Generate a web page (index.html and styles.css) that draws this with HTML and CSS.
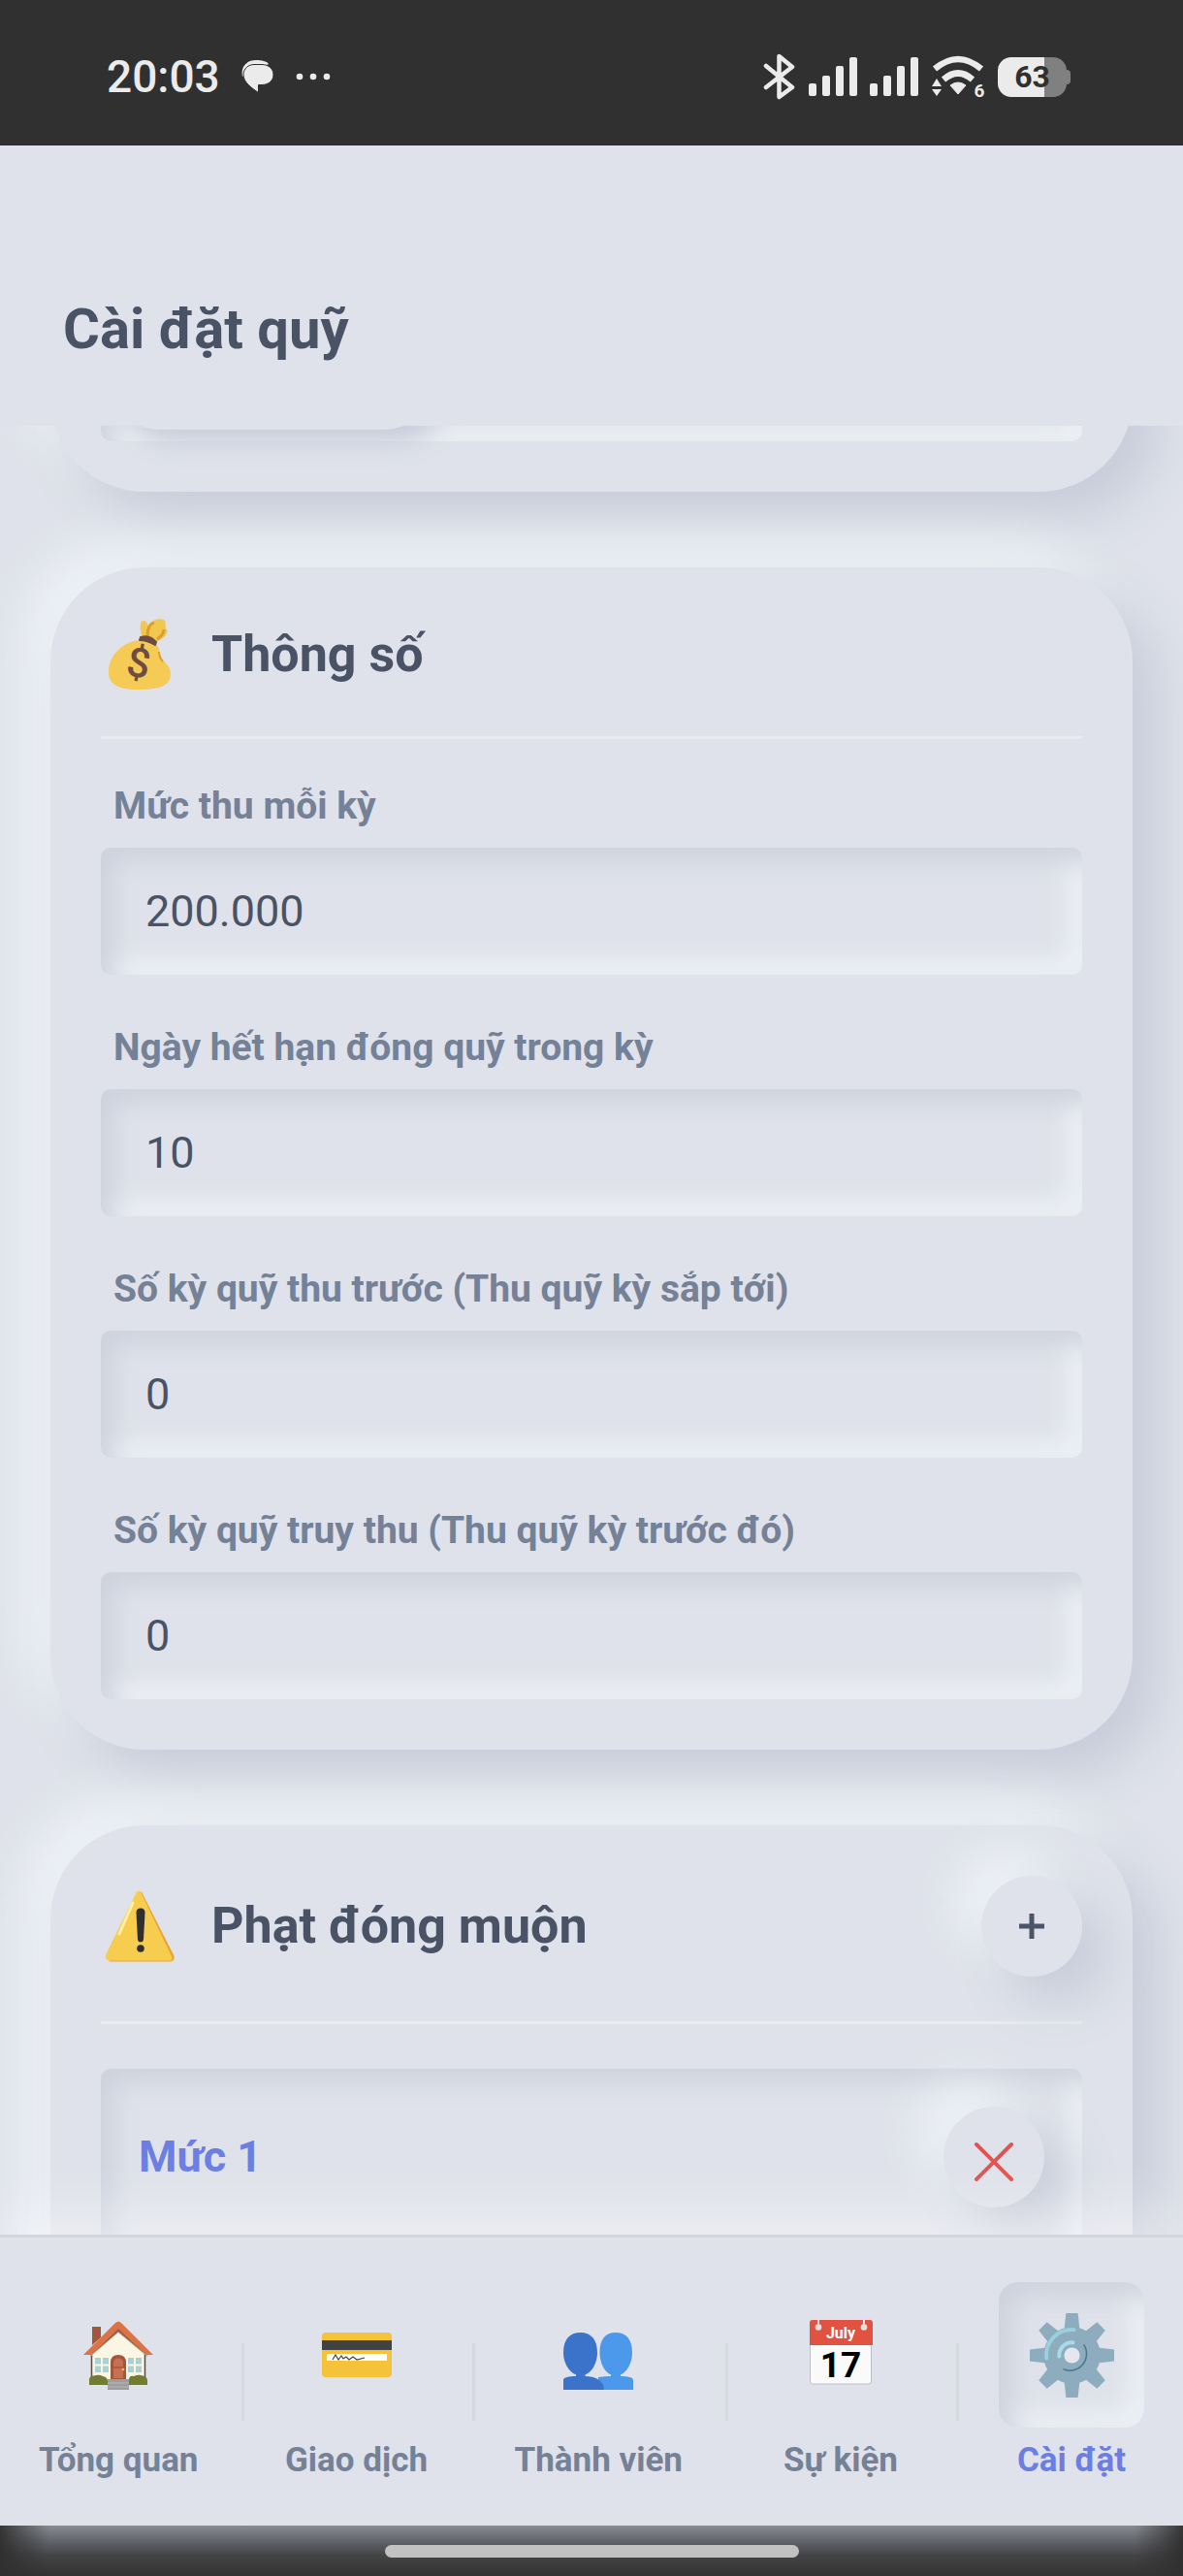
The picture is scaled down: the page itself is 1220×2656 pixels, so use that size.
FILE: index.html
```html
<!DOCTYPE html>
<html lang="vi">
  <head>
    <meta charset="UTF-8" />
    <meta name="viewport" content="width=device-width, initial-scale=1.0" />
    <title>Cài đặt quỹ</title>
    <link rel="stylesheet" href="styles.css">
  </head>
  <body>
    <div class="status-bar">
      <div class="status-left">
        <span class="clock">20:03</span>
        <svg class="chat-icon" width="34" height="34" viewBox="0 0 34 34">
          <path d="M2 17 C0 7 6 0 16 0 C22 0 27 1 29 4" fill="#ebebeb" />
          <path d="M14 4.500 H22 C29 4.500 34 9 34 15 C34 21 29 25.500 22 25.500 H18.500 V33.500 C12 29 3 23 3 15 C3 9 8 4.500 14 4.500 Z" fill="#ebebeb" stroke="#303030" stroke-width="1" />
        </svg>
        <svg width="36" height="8" viewBox="0 0 36 8" fill="#ebebeb">
          <circle cx="4" cy="4" r="3.300" />
          <circle cx="18" cy="4" r="3.300" />
          <circle cx="32" cy="4" r="3.300" />
        </svg>
      </div>
      <div class="status-right">
        <svg width="34" height="48" viewBox="0 0 34 48" fill="none" stroke="#ebebeb" stroke-width="4.500" stroke-linejoin="round" stroke-linecap="round">
          <path d="M3 13 L30 35 L16.500 45 V3 L30 14 L3 35" />
        </svg>
        <svg width="50" height="40" viewBox="0 0 50 40" fill="#ebebeb">
          <rect x="0" y="27" width="8" height="13" rx="2" />
          <rect x="14" y="19" width="8" height="21" rx="2" />
          <rect x="28" y="9" width="8" height="31" rx="2" />
          <rect x="42" y="0" width="8" height="40" rx="2" />
        </svg>
        <svg width="50" height="40" viewBox="0 0 50 40" fill="#ebebeb">
          <rect x="0" y="27" width="8" height="13" rx="2" />
          <rect x="14" y="19" width="8" height="21" rx="2" />
          <rect x="28" y="9" width="8" height="31" rx="2" />
          <rect x="42" y="0" width="8" height="40" rx="2" />
        </svg>
        <svg class="wifi-icon" width="56" height="48" viewBox="0 -3 56 48" fill="none">
          <path d="M4 13 Q28 -7 52 13" stroke="#ebebeb" stroke-width="6.500" />
          <path d="M13 24 Q28 11 43 24" stroke="#ebebeb" stroke-width="6.500" />
          <path d="M20 30 Q28 24 36 30 L28 39 Z" fill="#ebebeb" stroke="#ebebeb" stroke-linejoin="round" />
          <path d="M1 31 L6 23 L11 31 Z M1 34 L6 41 L11 34 Z" fill="#ebebeb" />
          <text x="50" y="42" class="wifi-gen">6</text>
        </svg>
        <div class="battery"><span>63</span></div>
      </div>
    </div>

    <header class="page-header">
      <h1>Cài đặt quỹ</h1>
    </header>

    <main class="content">
      <section class="card card-scrolled">
        <div class="tabs">
          <div class="tab"></div>
        </div>
      </section>

      <section class="card">
        <div class="card-header">
          <svg class="card-icon" viewBox="0 0 76 76">
            <path d="M42 18 C40 10 40 3 44 3 C47 3 48 6 49 8 C52 2 60 0 65 2 C68 4 66 8 67 11 C71 14 67 21 57 25 Z" fill="#f2c750" />
            <path d="M48 19 C48 11 51 6 55 5 M58 22 C61 20 65 17 65 12" stroke="#d99f2f" stroke-width="3" fill="none" />
            <path d="M40 23 C22 25 8 39 8 56 C8 69 19 74 38 74 C58 74 72 71 72 58 C72 49 65 46 63 42 C60 35 61 32 57 27 Z" fill="#f5cb55" />
            <path d="M60 35 C60 40 62 43 64 45" stroke="#d99f2f" stroke-width="2" fill="none" />
            <path d="M41 20 Q50 17 57 25 L56 28 Q48 23 40 23 Z" fill="#6d4c41" stroke="#6d4c41" stroke-width="2" stroke-linejoin="round" />
            <text x="39" y="61" transform="rotate(10 39 47)" class="dollar">$</text>
          </svg>
          <h2>Thông số</h2>
        </div>
        <div class="form-group">
          <label for="amount">Mức thu mỗi kỳ</label>
          <input id="amount" type="text" inputmode="numeric" value="200.000" />
        </div>
        <div class="form-group">
          <label for="due-day">Ngày hết hạn đóng quỹ trong kỳ</label>
          <input id="due-day" type="text" inputmode="numeric" value="10" />
        </div>
        <div class="form-group">
          <label for="ahead">Số kỳ quỹ thu trước (Thu quỹ kỳ sắp tới)</label>
          <input id="ahead" type="text" inputmode="numeric" value="0" />
        </div>
        <div class="form-group">
          <label for="back">Số kỳ quỹ truy thu (Thu quỹ kỳ trước đó)</label>
          <input id="back" type="text" inputmode="numeric" value="0" />
        </div>
      </section>

      <section class="card">
        <div class="card-header">
          <svg class="card-icon" viewBox="0 0 76 76">
            <path d="M41 4 L74 69 Q75 73 71 73 H10 Z" fill="#eba531" stroke="#eba531" stroke-width="3" stroke-linejoin="round" />
            <path d="M39 4 L71 71 H9 Q6 71 8 67 Z" fill="#f6cd4f" stroke="#f6cd4f" stroke-width="5" stroke-linejoin="round" />
            <path d="M33 14 L19 46" stroke="#fdf0a0" stroke-width="3" stroke-linecap="round" />
            <path d="M36.500 24 Q36.500 19.500 41 19.500 Q45.500 19.500 45.500 24 L44 52 Q43.500 54.500 41 54.500 Q38.500 54.500 38 52 Z" fill="#2f2f2f" />
            <circle cx="41" cy="61" r="3.800" fill="#2f2f2f" />
          </svg>
          <h2>Phạt đóng muộn</h2>
          <button class="round-btn" type="button" aria-label="Thêm mức">
            <svg width="40" height="40" viewBox="0 0 40 40">
              <path d="M20 7 V33 M7 20 H33" stroke="#4a5568" stroke-width="5" />
            </svg>
          </button>
        </div>
        <div class="level">
          <h3>Mức 1</h3>
          <button class="round-btn" type="button" aria-label="Xóa mức">
            <svg width="44" height="54" viewBox="0 0 44 54">
              <path d="M4 14 L40 50 M40 14 L4 50" stroke="#df5450" stroke-width="4" stroke-linecap="round" />
            </svg>
          </button>
        </div>
      </section>
    </main>

    <nav class="bottom-nav">
      <ul>
        <li>
          <a href="#overview">
            <span class="nav-icon">
              <svg viewBox="0 0 72 72">
                <path d="M9 7 H18 V18 L9 26 Z" fill="#a0573c" />
                <path d="M9 34 L36 10 L64 34 V66 H9 Z" fill="#fbf6e4" />
                <path d="M8.500 34 V60 M63.500 34 V60" stroke="#5b4a45" stroke-width="1.500" />
                <path d="M7 33 L36 8 L66 33 V38 L36 13 L7 38 Z" fill="#b3aa98" />
                <path d="M36 1.500 Q37 1.500 39 3 L72 36 H65 L36 9 L8 36 H0 L33 3 Q35 1.500 36 1.500 Z" fill="#dd7245" />
                <path d="M8 36 L36 9 L65 36 L36 12 Z" fill="#a0573c" />
                <path d="M12 39 H26 V54 H12 Z M46 39 H60 V54 H46 Z" fill="#a9d0d4" />
                <path d="M19 39 V54 M12 46.500 H26 M53 39 V54 M46 46.500 H60" stroke="#fbf6e4" stroke-width="2" />
                <path d="M28 62 V44 Q28 36 36 36 Q44 36 44 44 V62 Z" fill="#a0573c" />
                <path d="M31 60 V44 Q31 39.500 36 39.500 Q41 39.500 41 44 V60 Z" fill="#c96f53" />
                <path d="M31 49 H41" stroke="#a0573c" stroke-width="1.500" />
                <circle cx="41" cy="51" r="1.300" fill="#f5c04a" />
                <path d="M6 67 V62 Q6 57 11 57.500 Q16 56 20 58 Q25 59 25 63 V67 Z M47 67 V62 Q47 57 52 58 Q57 56 61 57.500 Q66 58 66 63 V67 Z" fill="#717d33" />
                <path d="M25 61 H47 V72 H25 Z" fill="#9d9d9d" />
                <path d="M25 65 H47 M25 69 H47" stroke="#b8b8b8" stroke-width="1" />
              </svg>
            </span>
            Tổng quan
          </a>
        </li>
        <li>
          <a href="#transactions">
            <span class="nav-icon">
              <svg viewBox="0 0 72 72">
                <rect x="0" y="13" width="72" height="46" rx="4" fill="#f4c33a" />
                <rect x="0" y="21" width="72" height="10" fill="#424242" />
                <rect x="5" y="35" width="62" height="7" fill="#ffffff" />
                <path d="M11 41 L14 36 L17 41 L20 37 L22 40 L25 38 L28 41 L32 38 L36 41 L44 39" stroke="#424242" stroke-width="1.200" fill="none" />
              </svg>
            </span>
            Giao dịch
          </a>
        </li>
        <li>
          <a href="#members">
            <span class="nav-icon">
              <svg viewBox="0 0 72 72">
                <path d="M54 13 C65 13 71 20 71 34 C71 45 65 54 59 56.500 V58 C66 58 72 59 72 62 V72 H36 V59 C42 58 49 58 49 58 V56.500 C43 54 37.500 45 37.500 34 C37.500 20 43 13 54 13 Z" fill="#4c98eb" />
                <path d="M17.500 13 C28.500 13 35 20 35 34 C35 45 29 54 22.500 56.500 V58 C32 58 42 62 42 72 H0 V62 C0 59 6 58 13 58 V56.500 C6.500 54 0 45 0 34 C0 20 6.500 13 17.500 13 Z" fill="#3b73cb" />
              </svg>
            </span>
            Thành viên
          </a>
        </li>
        <li>
          <a href="#events">
            <span class="nav-icon">
              <svg viewBox="0 0 72 72">
                <rect x="4.500" y="2" width="63" height="64" rx="3" fill="#fafafa" stroke="#bdbfc6" stroke-width="1" />
                <path d="M4 26 V3 Q4 0 7 0 H66 Q69 0 69 3 V26 Z" fill="#e25241" />
                <path d="M13 0 V7 M60 0 V7" stroke="#e0e0e0" stroke-width="2" />
                <circle cx="13" cy="7.500" r="3.300" fill="#e0e0e0" />
                <circle cx="60" cy="7.500" r="3.300" fill="#e0e0e0" />
                <text x="36" y="19" class="cal-month">July</text>
                <text x="36" y="59" class="cal-day">17</text>
              </svg>
            </span>
            Sự kiện
          </a>
        </li>
        <li class="active">
          <a href="#settings">
            <span class="nav-icon">
              <svg viewBox="0 0 86 86">
                <g fill="#8dacbd">
                  <circle cx="43" cy="43" r="29" />
                  <path id="teeth" d="M37 0 H49 L51 17 H35 Z M37 86 H49 L51 69 H35 Z M0 37 V49 L17 51 V35 Z M86 37 V49 L69 51 V35 Z" />
                  <use href="#teeth" transform="rotate(45 43 43) translate(1 1) scale(0.977)" />
                </g>
                <path d="M17 46 A26 26 0 0 1 45 17" stroke="#98d0de" stroke-width="4" stroke-linecap="round" fill="none" />
                <path d="M30 44 A13 13 0 0 1 44 30" stroke="#a9dbe6" stroke-width="4" stroke-linecap="round" fill="none" />
                <path d="M55 32 A17 17 0 0 1 34 57 A17 17 0 0 0 55 32 Z" fill="#4c7688" stroke="#4c7688" stroke-width="1.500" />
                <circle cx="43" cy="43" r="8" fill="#e6e6ee" />
              </svg>
            </span>
            Cài đặt
          </a>
        </li>
      </ul>
    </nav>

    <div class="gesture-bar">
      <div class="gesture-pill"></div>
    </div>
  </body>
</html>
```
FILE: styles.css
```css
:root {
  --bg: #dfe2ea;
  --dark: #c8ccd9;
  --text: #4a5365;
  --muted: #748196;
  --accent: #6b7ee2;
  --raised: 26px 26px 52px var(--dark), -26px -26px 52px rgba(248, 252, 255, 0.65);
  --inset: inset 13px 13px 26px #ced2dd, inset -13px -13px 26px rgba(248, 252, 255, 0.65);
}

* {
  box-sizing: border-box;
  margin: 0;
  padding: 0;
}

body {
  font-family: Roboto, "Noto Sans", sans-serif;
  background: var(--bg);
  color: var(--text);
  height: 100vh;
  display: flex;
  flex-direction: column;
  overflow: hidden;
}

svg {
  display: block;
  flex-shrink: 0;
}

/* status bar */
.status-bar {
  background: #303030;
  color: #ebebeb;
  height: 150px;
  flex-shrink: 0;
  padding: 8px 116px 0 110px;
  display: flex;
  align-items: center;
  justify-content: space-between;
}
.status-left,
.status-right {
  display: flex;
  align-items: center;
}
.clock {
  font-size: 46px;
  font-weight: 500;
}
.chat-icon {
  margin: 0 23px 0 21px;
}
.status-right {
  gap: 13px;
}
.wifi-icon {
  overflow: visible;
}
.wifi-gen {
  font-size: 19px;
  font-weight: 700;
  fill: #ebebeb;
  text-anchor: middle;
}
.battery {
  position: relative;
  width: 71px;
  height: 41px;
  margin-right: 4px;
  border-radius: 14px;
  background: linear-gradient(to right, #ebebeb 67%, #808080 67%);
  color: #303030;
  font-size: 32px;
  font-weight: 700;
  line-height: 41px;
  text-align: center;
}
.battery::after {
  content: "";
  position: absolute;
  right: -4px;
  top: 13px;
  width: 4px;
  height: 15px;
  border-radius: 0 4px 4px 0;
  background: #808080;
}

/* header */
.page-header {
  flex-shrink: 0;
  padding: 154px 65px 65px;
}
.page-header h1 {
  font-size: 58px;
  line-height: 70px;
  font-weight: 700;
}

/* cards */
.content {
  flex: 1;
  min-height: 0;
  overflow: hidden;
  padding: 0 52px;
}
.card {
  background: var(--bg);
  border-radius: 97px;
  padding: 52px;
  margin-bottom: 78px;
  box-shadow: var(--raised);
}
.card-scrolled {
  margin-top: -186px;
}
.card-header {
  display: flex;
  align-items: center;
  gap: 38px;
  padding-bottom: 46px;
  margin-bottom: 46px;
  border-bottom: 3px solid #e8ebf0;
}
.card-icon {
  width: 76px;
  height: 76px;
}
.card-header h2 {
  flex: 1;
  font-size: 52px;
  line-height: 60px;
  font-weight: 700;
}
.dollar {
  font-size: 42px;
  font-weight: 500;
  fill: #6d4c41;
  text-anchor: middle;
}

.tabs {
  display: grid;
  grid-template-columns: repeat(3, 1fr);
  height: 150px;
  padding: 12px;
  border-radius: 10px;
  box-shadow: var(--inset);
}
.tab {
  border-radius: 48px;
  background: var(--bg);
  box-shadow: 13px 13px 26px var(--dark);
}

/* form */
.form-group {
  margin-bottom: 52px;
}
.form-group:last-child {
  margin-bottom: 0;
}
.form-group label {
  display: block;
  padding-left: 13px;
  margin-bottom: 20px;
  font-size: 39px;
  line-height: 46px;
  font-weight: 700;
  color: var(--muted);
}
.form-group input {
  display: block;
  width: 100%;
  height: 131px;
  padding: 0 46px;
  border: none;
  outline: none;
  border-radius: 10px;
  background: transparent;
  box-shadow: var(--inset);
  font-family: inherit;
  font-size: 45px;
  color: var(--text);
}

.level {
  display: flex;
  align-items: flex-start;
  justify-content: space-between;
  height: 520px;
  padding: 39px;
  border-radius: 10px;
  box-shadow: var(--inset);
}
.level h3 {
  font-size: 45px;
  line-height: 104px;
  font-weight: 700;
  color: var(--accent);
}

.round-btn {
  display: flex;
  align-items: center;
  justify-content: center;
  width: 104px;
  height: 104px;
  border: none;
  border-radius: 50%;
  background: var(--bg);
  box-shadow: var(--raised);
  cursor: pointer;
}

/* bottom navigation */
.bottom-nav {
  position: relative;
  flex-shrink: 0;
  background: var(--bg);
  border-top: 3px solid #d3d7dd;
  padding: 46px 0;
  box-shadow: 0 -26px 52px rgba(255, 255, 255, 0.4);
}
.bottom-nav ul {
  display: flex;
  list-style: none;
  margin: 0 -4px;
}
.bottom-nav li {
  position: relative;
  flex: 1 1 auto;
}
.bottom-nav li + li::before {
  content: "";
  position: absolute;
  left: 0;
  top: 63px;
  width: 3px;
  height: 80px;
  background: #d5d9e0;
}
.bottom-nav a {
  display: flex;
  flex-direction: column;
  align-items: center;
  gap: 13px;
  font-size: 35px;
  line-height: 42px;
  font-weight: 700;
  color: var(--muted);
  text-decoration: none;
  white-space: nowrap;
}
.nav-icon {
  display: flex;
  align-items: center;
  justify-content: center;
  width: 150px;
  height: 150px;
  border-radius: 20px;
}
.nav-icon svg {
  width: 72px;
  height: 72px;
}
.bottom-nav .active a {
  color: var(--accent);
}
.active .nav-icon {
  box-shadow: var(--inset);
}
.active .nav-icon svg {
  width: 87px;
  height: 87px;
}
.cal-month {
  font-size: 16px;
  font-weight: 700;
  fill: #ffffff;
  text-anchor: middle;
}
.cal-day {
  font-size: 37px;
  font-weight: 700;
  fill: #000000;
  text-anchor: middle;
}

.gesture-bar {
  flex-shrink: 0;
  height: 52px;
  display: flex;
  align-items: center;
  justify-content: center;
  background:
    linear-gradient(to right, #303030, transparent 50px calc(100% - 50px), #303030),
    linear-gradient(#80848b, #5a5c61 35%, #444446 60%, #323232);
}
.gesture-pill {
  width: 35%;
  height: 13px;
  border-radius: 7px;
  background: #c2c2c2;
}
```
